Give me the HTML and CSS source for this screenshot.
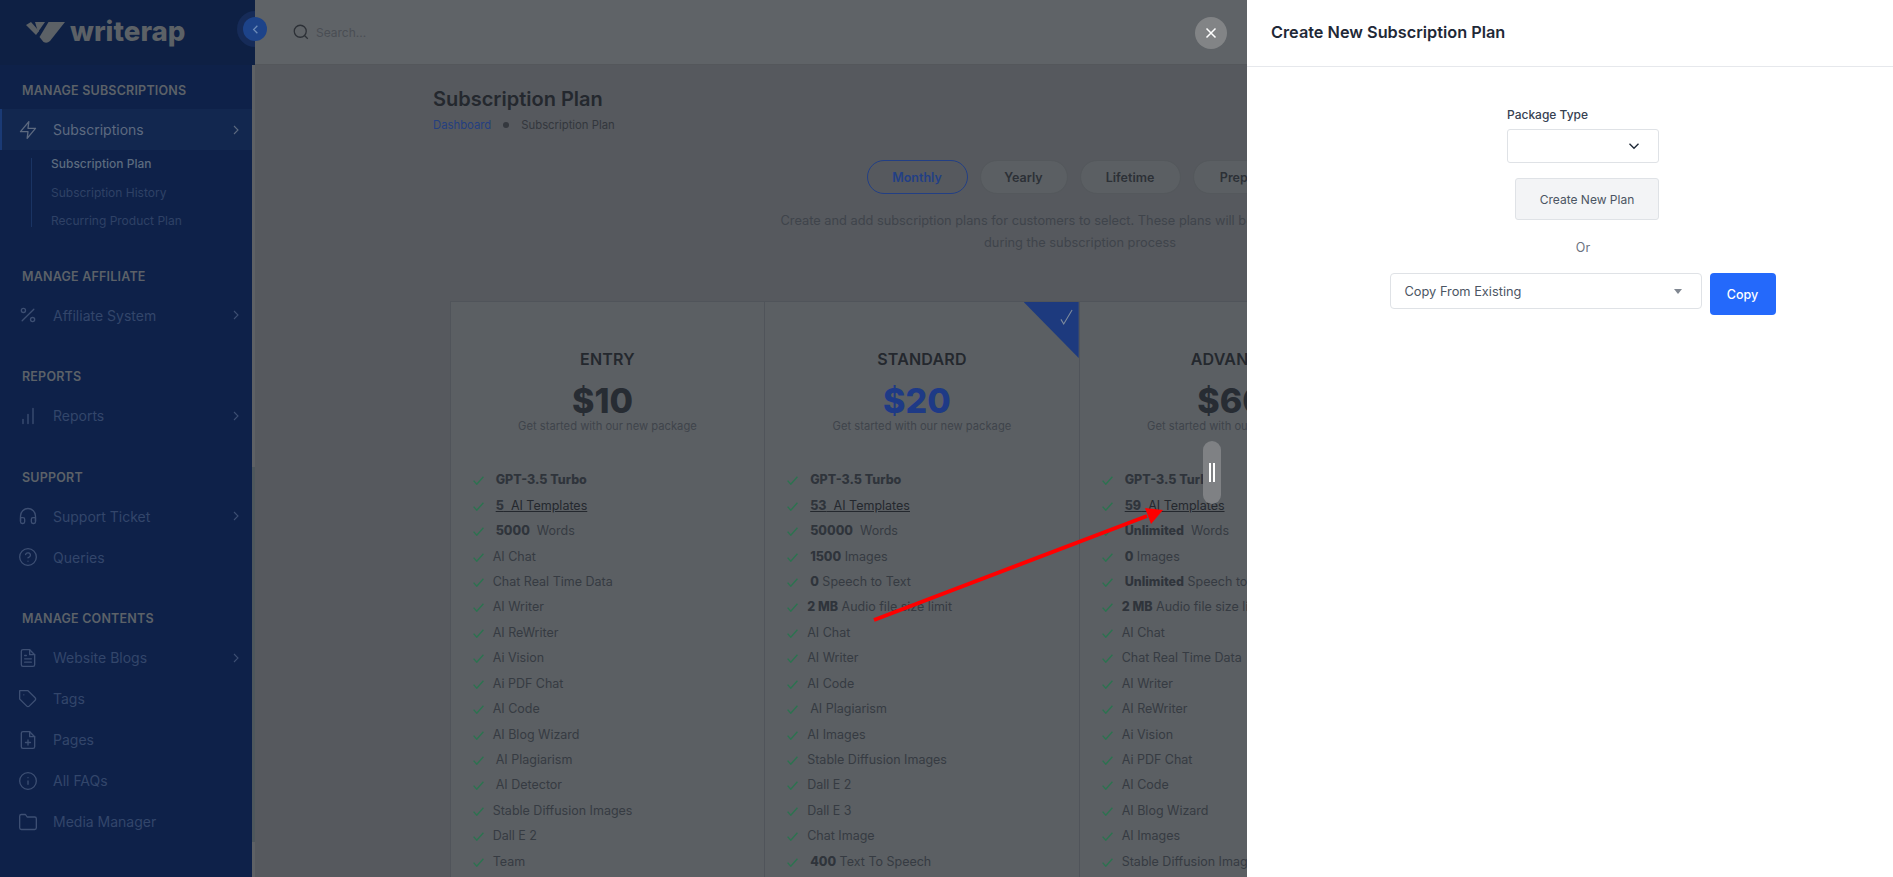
FILE: index.html
```html
<!DOCTYPE html>
<html lang="en">
<head>
  <meta charset="UTF-8" />
  <meta name="viewport" content="width=device-width, initial-scale=1" />
  <title>Subscription Plan</title>
  <link rel="stylesheet" href="styles.css">
</head>
<body>
  <svg class="sprite" width="0" height="0">
    <symbol id="i-check" viewBox="0 0 11 9"><path d="M.6 4.6l3.2 3.6L10.4.8" /></symbol>
    <symbol id="i-chevron" viewBox="0 0 24 24"><path d="M9 18l6-6-6-6" /></symbol>
  </svg>

  <aside class="sidebar">
    <div class="brand">
      <svg class="brand-mark" viewBox="0 0 42 24">
        <path d="M1 4l5-3 8 9-3 4z" />
        <path d="M10 1h10l-7 10z" />
        <path d="M23.500 1H40L25 20q-3 3-6.500 1l-4-5z" />
      </svg>
      <span class="brand-name">writerap</span>
      <span class="toggle-halo"></span>
    </div>
    <div class="side-scroll">
      <nav class="side-nav">
        <h6 class="nav-title">Manage Subscriptions</h6>
        <a class="nav-item active">
          <svg class="nav-icon" viewBox="0 0 24 24"><path d="M13 2L3 14h9l-1 8 10-12h-9l1-8z" /></svg>
          <span>Subscriptions</span>
          <svg class="nav-arrow"><use href="#i-chevron" /></svg>
        </a>
        <ul class="sub-nav">
          <li class="current">Subscription Plan</li>
          <li>Subscription History</li>
          <li>Recurring Product Plan</li>
        </ul>

        <h6 class="nav-title gap">Manage Affiliate</h6>
        <a class="nav-item">
          <svg class="nav-icon" viewBox="0 0 24 24"><path d="M19 5L5 19" /><circle cx="6.500" cy="6.500" r="2.500" /><circle cx="17.500" cy="17.500" r="2.500" /></svg>
          <span>Affiliate System</span>
          <svg class="nav-arrow"><use href="#i-chevron" /></svg>
        </a>

        <h6 class="nav-title gap">Reports</h6>
        <a class="nav-item">
          <svg class="nav-icon" viewBox="0 0 24 24"><path d="M18 21V3M12 21V10M6 21v-5" /></svg>
          <span>Reports</span>
          <svg class="nav-arrow"><use href="#i-chevron" /></svg>
        </a>

        <h6 class="nav-title gap">Support</h6>
        <a class="nav-item">
          <svg class="nav-icon" viewBox="0 0 24 24"><path d="M3 18v-6a9 9 0 0 1 18 0v6" /><path d="M21 19a2 2 0 0 1-2 2h-1a2 2 0 0 1-2-2v-3a2 2 0 0 1 2-2h3zM3 19a2 2 0 0 0 2 2h1a2 2 0 0 0 2-2v-3a2 2 0 0 0-2-2H3z" /></svg>
          <span>Support Ticket</span>
          <svg class="nav-arrow"><use href="#i-chevron" /></svg>
        </a>
        <a class="nav-item">
          <svg class="nav-icon" viewBox="0 0 24 24"><circle cx="12" cy="12" r="10" /><path d="M9.090 9a3 3 0 0 1 5.830 1c0 2-3 3-3 3M12 17h.01" /></svg>
          <span>Queries</span>
        </a>

        <h6 class="nav-title gap">Manage Contents</h6>
        <a class="nav-item">
          <svg class="nav-icon" viewBox="0 0 24 24"><path d="M14 2H6a2 2 0 0 0-2 2v16a2 2 0 0 0 2 2h12a2 2 0 0 0 2-2V8z" /><path d="M14 2v6h6M16 13H8M16 17H8M10 9H8" /></svg>
          <span>Website Blogs</span>
          <svg class="nav-arrow"><use href="#i-chevron" /></svg>
        </a>
        <a class="nav-item">
          <svg class="nav-icon" viewBox="0 0 24 24"><path d="M20.590 13.410l-7.170 7.170a2 2 0 0 1-2.830 0L2 12V2h10l8.590 8.590a2 2 0 0 1 0 2.820zM7 7h.01" /></svg>
          <span>Tags</span>
        </a>
        <a class="nav-item">
          <svg class="nav-icon" viewBox="0 0 24 24"><path d="M14 2H6a2 2 0 0 0-2 2v16a2 2 0 0 0 2 2h12a2 2 0 0 0 2-2V8z" /><path d="M14 2v6h6M12 18v-6M9 15h6" /></svg>
          <span>Pages</span>
        </a>
        <a class="nav-item">
          <svg class="nav-icon" viewBox="0 0 24 24"><circle cx="12" cy="12" r="10" /><path d="M12 16v-4M12 8h.01" /></svg>
          <span>All FAQs</span>
        </a>
        <a class="nav-item">
          <svg class="nav-icon" viewBox="0 0 24 24"><path d="M22 19a2 2 0 0 1-2 2H4a2 2 0 0 1-2-2V5a2 2 0 0 1 2-2h5l2 3h9a2 2 0 0 1 2 2z" /></svg>
          <span>Media Manager</span>
        </a>
      </nav>
      <div class="side-track"><div class="side-thumb"></div></div>
    </div>
  </aside>

  <div class="main">
    <header class="topbar">
      <svg class="search-icon" viewBox="0 0 24 24"><circle cx="11" cy="11" r="8" /><path d="M21 21l-4.350-4.350" /></svg>
      <span class="search-text">Search...</span>
    </header>

    <section class="content">
      <h1 class="page-title">Subscription Plan</h1>
      <div class="crumbs">
        <span class="crumb-link">Dashboard</span>
        <span class="crumb-dot"></span>
        <span>Subscription Plan</span>
      </div>

      <div class="pills">
        <span class="pill selected">Monthly</span>
        <span class="pill">Yearly</span>
        <span class="pill">Lifetime</span>
        <span class="pill">Prepaid</span>
      </div>
      <p class="intro">Create and add subscription plans for customers to select. These plans will be shown to customers<br>during the subscription process</p>

      <div class="plans">
        <article class="plan">
          <h3 class="plan-name">ENTRY</h3>
          <div class="plan-price">$10</div>
          <p class="plan-desc">Get started with our new package</p>
          <ul class="features">
            <li class="indent"><svg class="check"><use href="#i-check" /></svg><b>GPT-3.5 Turbo</b></li>
            <li class="indent"><svg class="check"><use href="#i-check" /></svg><u><b>5</b>&nbsp; AI Templates</u></li>
            <li class="indent"><svg class="check"><use href="#i-check" /></svg><b>5000</b>&nbsp; Words</li>
            <li><svg class="check"><use href="#i-check" /></svg>AI Chat</li>
            <li><svg class="check"><use href="#i-check" /></svg>Chat Real Time Data</li>
            <li><svg class="check"><use href="#i-check" /></svg>AI Writer</li>
            <li><svg class="check"><use href="#i-check" /></svg>AI ReWriter</li>
            <li><svg class="check"><use href="#i-check" /></svg>Ai Vision</li>
            <li><svg class="check"><use href="#i-check" /></svg>Ai PDF Chat</li>
            <li><svg class="check"><use href="#i-check" /></svg>AI Code</li>
            <li><svg class="check"><use href="#i-check" /></svg>AI Blog Wizard</li>
            <li class="indent"><svg class="check"><use href="#i-check" /></svg>AI Plagiarism</li>
            <li class="indent"><svg class="check"><use href="#i-check" /></svg>AI Detector</li>
            <li><svg class="check"><use href="#i-check" /></svg>Stable Diffusion Images</li>
            <li><svg class="check"><use href="#i-check" /></svg>Dall E 2</li>
            <li><svg class="check"><use href="#i-check" /></svg>Team</li>
          </ul>
        </article>

        <article class="plan">
          <div class="ribbon"><svg class="ribbon-check" viewBox="0 0 14 18"><path d="M1 11l3 5L13 1" /></svg></div>
          <h3 class="plan-name">STANDARD</h3>
          <div class="plan-price blue">$20</div>
          <p class="plan-desc">Get started with our new package</p>
          <ul class="features">
            <li class="indent"><svg class="check"><use href="#i-check" /></svg><b>GPT-3.5 Turbo</b></li>
            <li class="indent"><svg class="check"><use href="#i-check" /></svg><u><b>53</b>&nbsp; AI Templates</u></li>
            <li class="indent"><svg class="check"><use href="#i-check" /></svg><b>50000</b>&nbsp; Words</li>
            <li class="indent"><svg class="check"><use href="#i-check" /></svg><b>1500</b> Images</li>
            <li class="indent"><svg class="check"><use href="#i-check" /></svg><b>0</b> Speech to Text</li>
            <li><svg class="check"><use href="#i-check" /></svg><b>2 MB</b>&nbsp;Audio file size limit</li>
            <li><svg class="check"><use href="#i-check" /></svg>AI Chat</li>
            <li><svg class="check"><use href="#i-check" /></svg>AI Writer</li>
            <li><svg class="check"><use href="#i-check" /></svg>AI Code</li>
            <li class="indent"><svg class="check"><use href="#i-check" /></svg>AI Plagiarism</li>
            <li><svg class="check"><use href="#i-check" /></svg>AI Images</li>
            <li><svg class="check"><use href="#i-check" /></svg>Stable Diffusion Images</li>
            <li><svg class="check"><use href="#i-check" /></svg>Dall E 2</li>
            <li><svg class="check"><use href="#i-check" /></svg>Dall E 3</li>
            <li><svg class="check"><use href="#i-check" /></svg>Chat Image</li>
            <li class="indent"><svg class="check"><use href="#i-check" /></svg><b>400</b> Text To Speech</li>
          </ul>
        </article>

        <article class="plan">
          <h3 class="plan-name">ADVANCED</h3>
          <div class="plan-price">$60</div>
          <p class="plan-desc">Get started with our new package</p>
          <ul class="features">
            <li class="indent"><svg class="check"><use href="#i-check" /></svg><b>GPT-3.5 Turbo</b></li>
            <li class="indent"><svg class="check"><use href="#i-check" /></svg><u><b>59</b>&nbsp; AI Templates</u></li>
            <li class="indent"><svg class="check"><use href="#i-check" /></svg><b>Unlimited</b>&nbsp; Words</li>
            <li class="indent"><svg class="check"><use href="#i-check" /></svg><b>0</b> Images</li>
            <li class="indent"><svg class="check"><use href="#i-check" /></svg><b>Unlimited</b> Speech to Text</li>
            <li><svg class="check"><use href="#i-check" /></svg><b>2 MB</b>&nbsp;Audio file size limit</li>
            <li><svg class="check"><use href="#i-check" /></svg>AI Chat</li>
            <li><svg class="check"><use href="#i-check" /></svg>Chat Real Time Data</li>
            <li><svg class="check"><use href="#i-check" /></svg>AI Writer</li>
            <li><svg class="check"><use href="#i-check" /></svg>AI ReWriter</li>
            <li><svg class="check"><use href="#i-check" /></svg>Ai Vision</li>
            <li><svg class="check"><use href="#i-check" /></svg>Ai PDF Chat</li>
            <li><svg class="check"><use href="#i-check" /></svg>AI Code</li>
            <li><svg class="check"><use href="#i-check" /></svg>AI Blog Wizard</li>
            <li><svg class="check"><use href="#i-check" /></svg>AI Images</li>
            <li><svg class="check"><use href="#i-check" /></svg>Stable Diffusion Images</li>
          </ul>
        </article>
      </div>
    </section>
  </div>

  <!-- toggle, close, offcanvas and annotation sit over the dimmed page -->
  <button class="side-toggle"><svg viewBox="0 0 24 24"><path d="M15 18l-6-6 6-6" /></svg></button>
  <button class="close-btn"><svg viewBox="0 0 24 24"><path d="M18 6L6 18M6 6l12 12" /></svg></button>

  <aside class="offcanvas">
    <div class="offcanvas-head">Create New Subscription Plan</div>
    <div class="offcanvas-body">
      <div class="package-box">
        <label class="field-label">Package Type</label>
        <div class="package-select"><svg viewBox="0 0 24 24"><path d="M6 9l6 6 6-6" /></svg></div>
        <button class="btn-light">Create New Plan</button>
      </div>
      <div class="or-text">Or</div>
      <div class="copy-row">
        <div class="copy-select"><span>Copy From Existing</span><i class="caret"></i></div>
        <button class="btn-primary">Copy</button>
      </div>
    </div>
  </aside>

  <svg class="annotation" viewBox="0 0 1893 877">
    <path d="M874 620L1147 516" />
    <polygon points="1163,510 1145,508 1151,524" />
  </svg>
  <div class="drag-handle"><i></i><i></i></div>
</body>
</html>
```

FILE: styles.css
```css
* {
  margin: 0;
  padding: 0;
  box-sizing: border-box;
}

html,
body {
  height: 100%;
  overflow: hidden;
}

body {
  display: flex;
  font-family: 'Inter', 'Liberation Sans', sans-serif;
  background-color: #56595e; /* page under the backdrop */
  color: #3b4047;
}

.sprite {
  position: absolute;
}

/* sidebar */
.sidebar {
  display: flex;
  flex-direction: column;
  flex: 0 0 255px;
  height: 100%;
}

.brand {
  position: relative;
  display: flex;
  align-items: center;
  flex: 0 0 65px;
  padding-left: 25px;
  background-color: #0e2044;
  overflow: hidden;
}

.brand-mark {
  flex: 0 0 42px;
  width: 42px;
  height: 24px;
  fill: #5c6166;
}

.brand-name {
  margin-left: 3px;
  margin-top: -3px;
  font-size: 27.700px;
  font-weight: 800;
  color: #5c6166;
}

.toggle-halo {
  position: absolute;
  left: 237px;
  top: 11px;
  width: 36px;
  height: 36px;
  border-radius: 50%;
  background-color: #162b58;
}

.side-toggle {
  position: absolute;
  left: 243px;
  top: 17px;
  width: 24px;
  height: 24px;
  display: flex;
  align-items: center;
  justify-content: center;
  border: none;
  border-radius: 50%;
  background-color: #1d4389;
}

.side-toggle svg {
  width: 15px;
  height: 15px;
  fill: none;
  stroke: #6d8bb8;
  stroke-width: 2;
}

.side-scroll {
  display: flex;
  flex: 1;
  min-height: 0;
}

.side-nav {
  flex: 0 0 252px;
  padding-top: 16px;
  background-color: #0e2149;
}

.nav-title {
  height: 20px;
  margin-bottom: 8px;
  padding-left: 22px;
  font-size: 12.500px;
  font-weight: 600;
  line-height: 20px;
  letter-spacing: 0.2px;
  text-transform: uppercase;
  color: #5c6168;
}

.nav-title.gap {
  margin-top: 31.500px;
}

.nav-item {
  display: flex;
  align-items: center;
  height: 41px;
  padding-left: 18px;
  font-size: 14px;
  color: #33466b;
}

.nav-item span {
  flex: 1;
  margin-left: 15px;
}

.nav-item.active {
  background-color: #12274f;
  box-shadow: inset 3px 0 0 -1px #1a3a75;
  color: #5d6a80;
}

.nav-icon {
  flex: 0 0 20px;
  width: 20px;
  height: 20px;
  fill: none;
  stroke: #3d4f73;
  stroke-width: 1.6;
  stroke-linecap: round;
  stroke-linejoin: round;
}

.nav-item.active .nav-icon {
  stroke: #5d6a80;
}

.nav-arrow {
  width: 16px;
  height: 16px;
  margin-right: 8px;
  fill: none;
  stroke: #3d4f73;
  stroke-width: 1.6;
}

.nav-item.active .nav-arrow {
  stroke: #5d6a80;
}

.sub-nav {
  list-style: none;
  margin: 8px 0 39.500px 31px;
  padding-left: 19px;
  border-left: 1px solid #1a3463;
  font-size: 12px;
  color: #2f4166;
}

.sub-nav li {
  height: 28.500px;
  line-height: 12px;
}

.sub-nav li:last-child {
  height: 12px;
}

.sub-nav .current {
  font-weight: 500;
  color: #5c6b7f;
}

.side-track {
  flex: 0 0 3px;
  padding-top: 402px;
  background-color: #5e6165;
}

.side-thumb {
  height: 375px;
  background-color: #4e575c;
}

/* main area */
.main {
  flex: 1;
  min-width: 0;
}

.topbar {
  display: flex;
  align-items: center;
  height: 65px;
  padding-left: 37px;
  background-color: #5f6367;
  border-bottom: 1px solid #54575b;
}

.search-icon {
  width: 18px;
  height: 18px;
  fill: none;
  stroke: #2c3036;
  stroke-width: 1.7;
}

.search-text {
  margin-left: 6px;
  font-size: 12px;
  color: #4a4e54;
}

.content {
  width: 1294px;
  margin-left: 178px;
  padding-top: 23px;
}

.page-title {
  font-size: 20px;
  font-weight: 600;
  line-height: 22px;
  color: #24282e;
}

.crumbs {
  display: flex;
  align-items: center;
  gap: 12px;
  margin-top: 7px;
  font-size: 11.300px;
  line-height: 16px;
  color: #33373d;
}

.crumb-link {
  color: #243f80;
}

.crumb-dot {
  width: 6px;
  height: 6px;
  border-radius: 50%;
  background-color: #34383e;
}

.pills {
  display: grid;
  grid-template-columns: 101px 88px 101px 101px;
  justify-content: center;
  gap: 12px;
  margin-top: 27px;
}

.pill {
  display: flex;
  align-items: center;
  justify-content: center;
  height: 34px;
  border: 1px solid #54585c;
  border-radius: 17px;
  background-color: #5b5f63;
  font-size: 12.500px;
  font-weight: 600;
  color: #2c3036;
}

.pill.selected {
  border-color: #223f85;
  background-color: transparent;
  color: #223f85;
}

.intro {
  margin-top: 16px;
  font-size: 12.800px;
  line-height: 22px;
  text-align: center;
  color: #3f444b;
}

.plans {
  display: grid;
  grid-template-columns: repeat(4, 314.500px);
  margin: 47px 0 0 16.700px;
  height: 900px;
}

.plan {
  position: relative;
  height: 100%;
  padding-top: 46px;
  border-left: 1px solid #50545a;
  border-top: 1px solid #50545a;
  background-color: #5b5f63;
  text-align: center;
}

.ribbon {
  position: absolute;
  top: 0;
  right: 0;
  width: 55px;
  height: 56px;
  background-color: #1d3a7e;
  clip-path: polygon(0 0, 100% 0, 100% 100%);
}

.ribbon-check {
  position: absolute;
  right: 6px;
  top: 7px;
  width: 13px;
  height: 17px;
  fill: none;
  stroke: #7d8a9c;
  stroke-width: 1.2;
}

.plan-name {
  font-size: 16px;
  font-weight: 600;
  line-height: 22px;
  letter-spacing: 0.2px;
  color: #24282e;
}

.plan-price {
  margin-top: 14px;
  padding-right: 10px;
  font-size: 34px;
  font-weight: 800;
  line-height: 34px;
  color: #272c33;
}

.plan-price.blue {
  color: #1e3a86;
}

.plan-desc {
  font-size: 11.200px;
  line-height: 16px;
  color: #3f444b;
}

.features {
  list-style: none;
  margin-top: 33px;
  padding-left: 22px;
  text-align: left;
  font-size: 12.500px;
  color: #363b42;
}

.features li {
  display: flex;
  align-items: center;
  height: 25.450px;
  white-space: pre;
}

.features li.indent .check {
  margin-right: 12px;
}

.features b {
  font-weight: 800;
  color: #2f343b;
}

.features u {
  color: #24282e;
}

.check {
  flex: 0 0 11px;
  width: 11px;
  height: 9px;
  margin: 2px 9px 0 0;
  fill: none;
  stroke: #2c7350;
  stroke-width: 1.4;
}

/* offcanvas panel */
.close-btn {
  position: absolute;
  left: 1195px;
  top: 17px;
  width: 32px;
  height: 32px;
  display: flex;
  align-items: center;
  justify-content: center;
  border: none;
  border-radius: 50%;
  background-color: #828486;
}

.close-btn svg {
  width: 18px;
  height: 18px;
  fill: none;
  stroke: #fff;
  stroke-width: 2;
}

.offcanvas {
  position: absolute;
  top: 0;
  right: 0;
  bottom: 0;
  width: 646px;
  background-color: #fff;
}

.offcanvas-head {
  height: 67px;
  padding: 0 24px;
  border-bottom: 1px solid #e6e8ec;
  font-size: 16.300px;
  font-weight: 600;
  line-height: 65px;
  color: #1f2937;
}

.offcanvas-body {
  display: flex;
  flex-direction: column;
  align-items: center;
  padding: 39px 0 0 26px;
}

.package-box {
  width: 152px;
}

.field-label {
  display: block;
  font-size: 12px;
  font-weight: 500;
  line-height: 18px;
  color: #374151;
}

.package-select {
  display: flex;
  align-items: center;
  justify-content: flex-end;
  height: 34px;
  margin-top: 5px;
  padding-right: 15px;
  border: 1px solid #dfe2e6;
  border-radius: 3px;
}

.package-select svg {
  width: 18px;
  height: 18px;
  fill: none;
  stroke: #1f2937;
  stroke-width: 1.8;
}

.btn-light {
  display: block;
  width: 144px;
  height: 42px;
  margin: 15px 0 0 8px;
  border: 1px solid #dfe2e6;
  border-radius: 3px;
  background-color: #f3f4f6;
  font-family: inherit;
  font-size: 12px;
  color: #4b5563;
}

.or-text {
  margin-top: 19px;
  font-size: 12.500px;
  line-height: 18px;
  color: #6b7280;
}

.copy-row {
  display: flex;
  align-items: flex-start;
  gap: 8px;
  margin-top: 16px;
  margin-left: -1px;
}

.copy-select {
  display: flex;
  align-items: center;
  justify-content: space-between;
  width: 312px;
  height: 36px;
  padding: 0 19px 0 14px;
  border: 1px solid #dfe2e6;
  border-radius: 4px;
  font-size: 12.800px;
  color: #4b5563;
}

.caret {
  border-left: 4px solid transparent;
  border-right: 4px solid transparent;
  border-top: 5px solid #808791;
}

.btn-primary {
  width: 66px;
  height: 42px;
  border: none;
  border-radius: 4px;
  background-color: #2469fb;
  font-family: inherit;
  font-size: 12.500px;
  font-weight: 500;
  color: #fff;
}

/* red arrow and drag handle from the screen recorder */
.annotation {
  position: absolute;
  left: 0;
  top: 0;
  width: 1893px;
  height: 877px;
  fill: #f00;
  stroke: none;
  pointer-events: none;
}

.annotation path {
  fill: none;
  stroke: #f00;
  stroke-width: 4;
}

.drag-handle {
  position: absolute;
  left: 1203px;
  top: 441px;
  width: 18px;
  height: 63px;
  display: flex;
  align-items: center;
  justify-content: center;
  gap: 2px;
  border-radius: 9px;
  background-color: #7f8184;
}

.drag-handle i {
  width: 2px;
  height: 19px;
  background-color: #fff;
}
```
